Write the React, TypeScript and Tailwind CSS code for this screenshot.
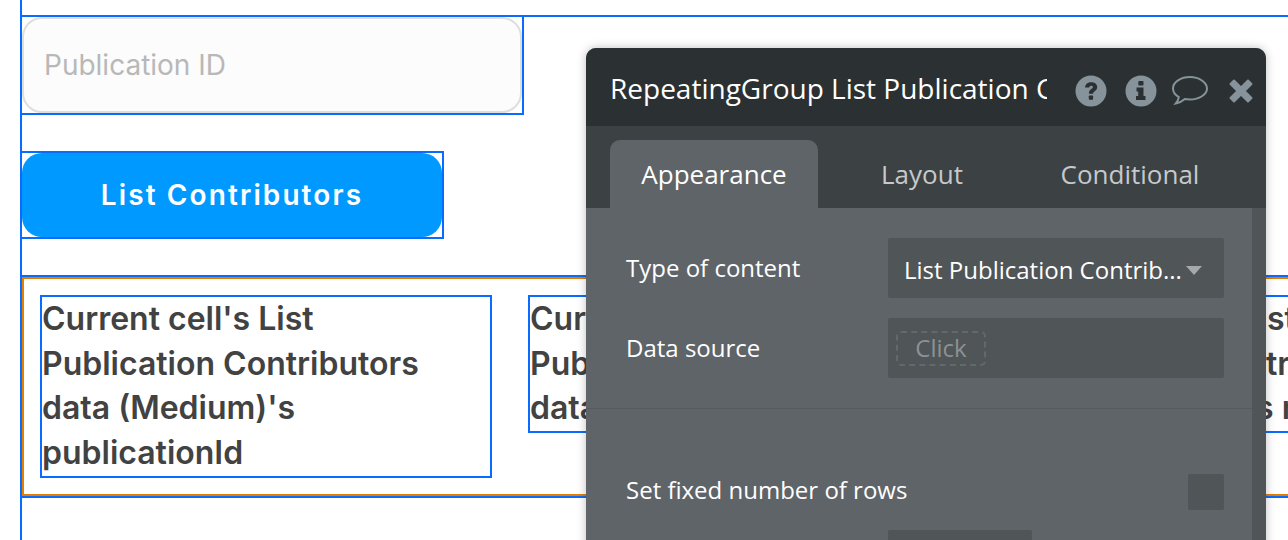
const sans = "font-['Open_Sans',sans-serif]";

function HelpIcon() {
  return (
    <svg width="32" height="32" viewBox="0 0 32 32">
      <circle cx="16" cy="16" r="15.5" fill="#87939a" />
      <path d="M10 12.500c.3-3.400 2.800-5.300 6.200-5.300 3.500 0 6 2 6 4.900 0 2.300-1.300 3.400-2.700 4.300-1 .7-1.400 1.100-1.400 2.300h-4.200c-.1-2.400.7-3.500 2.200-4.500 1.100-.7 1.800-1.200 1.800-2.100 0-.9-.7-1.400-1.700-1.400-1.100 0-1.800.7-2 1.900z" fill="#2b3133" />
      <rect x="13.800" y="20.500" width="4.300" height="4.200" rx="0.700" fill="#2b3133" />
    </svg>
  );
}

function InfoIcon() {
  return (
    <svg width="32" height="32" viewBox="0 0 32 32">
      <circle cx="16" cy="16" r="15.500" fill="#87939a" />
      <rect x="13.300" y="6" width="5.200" height="4.600" rx="0.800" fill="#2b3133" />
      <path d="M11.500 12.500h7v8.500h2v4h-9.500v-4h2.200v-4.500h-1.700z" fill="#2b3133" />
    </svg>
  );
}

function CommentIcon() {
  return (
    <svg width="38" height="34" viewBox="0 0 38 34" fill="none">
      <path d="M19 3C9.800 3 2 8 2 14.500c0 3.500 2.300 6.500 5.800 8.600-.3 2.200-1.300 4.300-3 6.400 3.200-.5 6.700-2.300 9-4.400 1.700.3 3.400.4 5.200.4 9.200 0 17-5 17-11S28.200 3 19 3z" stroke="#87939a" strokeWidth="2" />
    </svg>
  );
}

function CloseIcon() {
  return (
    <svg width="26" height="26" viewBox="0 0 26 26">
      <path d="M6 2.500L13 9.500L20 2.500L23.500 6L16.500 13L23.500 20L20 23.500L13 16.500L6 23.500L2.500 20L9.500 13L2.500 6Z" fill="#87939a" stroke="#87939a" strokeWidth="2" strokeLinejoin="round" />
    </svg>
  );
}

function CellLine({ left, right, rightWidth }: { left: string; right: string; rightWidth: string }) {
  return (
    <div className="flex justify-between whitespace-nowrap h-[44.500px]">
      <span>{left}</span>
      <span className={rightWidth}>{right}</span>
    </div>
  );
}

export default function App() {
  return (
    <div className="relative w-[1288px] h-[540px] overflow-hidden bg-white font-['Inter',sans-serif]">
      <div className="h-[540px] ml-5 border-l-2 border-[#0a6cff] flex flex-col">
        <div className="mt-[15px] border-t-2 border-[#0a6cff]">
          <div className="w-[502px] h-[98px] border-r-2 border-b-2 border-[#0a6cff]">
            <div className="h-full rounded-[20px] border-2 border-[#dedede] bg-[#fcfcfc] pl-[20px] flex items-center text-[28px] text-[#b8b8b8]">
              Publication ID
            </div>
          </div>
        </div>

        <div className="mt-[36px] w-[422px] h-[88px] border-t-2 border-r-2 border-b-2 border-[#0a6cff]">
          <div className="h-full rounded-[20px] bg-[#0099ff] flex items-center justify-center text-[28px] font-semibold tracking-[2.100px] text-white">
            List Contributors
          </div>
        </div>

        <div className="mt-[36px] h-[223px] border-t-2 border-b-2 border-[#0a6cff]">
          <div className="h-full border-2 border-[#e67e00] border-r-0 flex items-start pl-[16px] pt-[16px] gap-[36px] text-[32px] font-semibold leading-[44.500px] text-[#424242]">
            <div className="w-[452px] h-[183px] shrink-0 border-2 border-[#0a6cff]">
              Current cell's List<br />
              Publication Contributors<br />
              data (Medium)'s<br />
              publicationId
            </div>
            <div className="w-[770px] h-[138px] shrink-0 border-2 border-[#0a6cff]">
              <CellLine left="Current cell's List" right="st" rightWidth="w-[29px]" />
              <CellLine left="Publication Contributors" right="tr" rightWidth="w-[30px]" />
              <CellLine left="data (Medium)'s" right="s r" rightWidth="w-[40px]" />
            </div>
          </div>
        </div>
      </div>

      <div className={`absolute left-[586px] top-[48px] w-[680px] h-[520px] rounded-t-[10px] bg-[#5f6468] shadow-[0_0_10px_rgba(0,0,0,0.25)] overflow-hidden ${sans}`}>
        <div className="h-[78px] bg-[#2b3133] flex items-center pl-[24px] text-white">
          <div className="w-[437px] pt-[2px] overflow-hidden whitespace-nowrap text-[28px]">RepeatingGroup List Publication Contributors</div>
          <div className="ml-[28px] pt-[8px] flex items-center">
            <HelpIcon />
            <div className="ml-[18px]"><InfoIcon /></div>
            <div className="ml-[14px]"><CommentIcon /></div>
            <div className="ml-[19px]"><CloseIcon /></div>
          </div>
        </div>

        <div className="h-[82px] bg-[#3c4144] flex items-end pl-[24px] text-[26px]">
          <div className="w-[208px] h-[68px] rounded-t-[10px] bg-[#5f6468] flex items-center justify-center text-white">Appearance</div>
          <div className="w-[208px] h-[68px] flex items-center justify-center text-[#c6c9cb]">Layout</div>
          <div className="w-[208px] h-[68px] flex items-center justify-center text-[#c6c9cb]">Conditional</div>
        </div>

        <div className="flex">
          <div className="w-[666px] text-[24px] text-white">
            <div className="pt-[30px] pl-[40px] pr-[28px] flex flex-col gap-[20px] pb-[30px] border-b border-[#555a5e]">
              <div className="flex items-center justify-between">
                <span>Type of content</span>
                <div className="w-[336px] h-[60px] rounded-[2px] bg-[#505558] flex items-center pl-[16px]">
                  <span className="pt-[4px] whitespace-nowrap">List Publication Contrib...</span>
                  <span className="ml-[4px] mt-[4px] w-0 h-0 border-l-[8px] border-r-[8px] border-t-[9px] border-l-transparent border-r-transparent border-t-[#a5a9ab]" />
                </div>
              </div>
              <div className="flex items-center justify-between">
                <span>Data source</span>
                <div className="w-[336px] h-[60px] rounded-[2px] bg-[#505558] flex items-center pl-[8px]">
                  <span className="w-[90px] h-[35px] rounded-[5px] border-2 border-dashed border-[#63686b] flex items-center justify-center text-[#8d9193]">Click</span>
                </div>
              </div>
            </div>
            <div className="pt-[63px] pl-[40px] pr-[28px] flex items-center justify-between">
              <span className="mb-[4px]">Set fixed number of rows</span>
              <div className="w-[36px] h-[36px] rounded-[2px] bg-[#505558]" />
            </div>
            <div className="mt-[18px] ml-[302px] w-[144px] h-[40px] rounded-[2px] bg-[#505558]" />
          </div>
          <div className="w-[14px] h-[400px] bg-[#505558]" />
        </div>
      </div>
    </div>
  );
}
